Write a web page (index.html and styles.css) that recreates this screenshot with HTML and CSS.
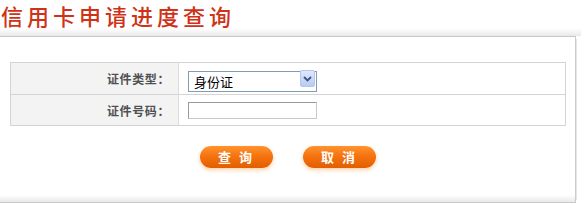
FILE: index.html
```html
<!DOCTYPE html>
<html lang="zh-CN">
<head>
<meta charset="utf-8">
<title>信用卡申请进度查询</title>
<link rel="stylesheet" href="styles.css">
</head>
<body>
<div class="page">
  <h1 class="title">信用卡申请进度查询</h1>
  <div class="band"></div>
  <div class="box">
    <table class="form">
      <tr>
        <th>证件类型：</th>
        <td>
          <div class="select-wrap">
            <select class="select"><option>身份证</option></select>
            <span class="arrow"><svg width="9" height="6" viewBox="0 0 9 6"><path d="M1 1 L4.5 4.5 L8 1" fill="none" stroke="#3d5484" stroke-width="1.8"/></svg></span>
          </div>
        </td>
      </tr>
      <tr>
        <th>证件号码：</th>
        <td><input class="input" type="text"></td>
      </tr>
    </table>
    <div class="actions">
      <button class="btn" type="button">查询</button>
      <button class="btn" type="button">取消</button>
    </div>
    <div class="foot"></div>
  </div>
</div>
</body>
</html>
```
FILE: styles.css
```css
html, body {
  margin: 0;
  padding: 0;
  background: #fff;
}
.page {
  width: 582px;
  height: 205px;
  overflow: hidden;
  font-family: "Noto Sans CJK SC", "Liberation Sans", sans-serif;
}
.title {
  margin: 0;
  height: 28px;
  padding: 0 0 0 1px;
  line-height: 30px;
  font-size: 22px;
  font-weight: 500;
  letter-spacing: 4px;
  color: #cf3317;
  white-space: nowrap;
}
.band {
  position: relative;
  height: 8px;
  width: 581px;
  background: linear-gradient(rgba(255,255,255,0), #e9e9e9);
}
.box {
  box-sizing: border-box;
  width: 576px;
  height: 167px;
  border-top: 1px solid #c6c6c6;
  border-right: 1px solid #cccccc;
  box-shadow: 4px 0 0 -3px #e6e6e6;
  padding-top: 25px;
  display: flex;
  flex-direction: column;
}
.form {
  margin-left: 10px;
  width: 556px;
  border-collapse: collapse;
  border: 1px solid #d4d4d4;
}
.form th, .form td {
  border-top: 1px solid #d4d4d4;
  border-bottom: 1px solid #d4d4d4;
  padding: 0;
}
.form tr:first-child th, .form tr:first-child td { height: 31px; }
.form tr:last-child th, .form tr:last-child td { height: 30px; }
.form th {
  width: 159px;
  padding-right: 8px;
  text-align: right;
  background: #f3f3f3;
  border-right: 1px solid #dcdcdc;
  font-size: 12px;
  font-weight: bold;
  color: #505050;
  letter-spacing: 0.6px;
}
.form td {
  padding-left: 9px;
  vertical-align: middle;
}
.select-wrap {
  position: relative;
  width: 129px;
  height: 21px;
}
.select {
  -webkit-appearance: none;
  appearance: none;
  box-sizing: border-box;
  width: 129px;
  height: 21px;
  margin: 0;
  padding: 0 0 0 5px;
  border: 1px solid #7f9db9;
  border-radius: 0;
  background: #fff;
  font-family: "Noto Sans CJK SC", sans-serif;
  font-size: 13px;
  color: #000;
}
.arrow {
  position: absolute;
  right: 2px;
  top: 2px;
  width: 15px;
  height: 17px;
  box-sizing: border-box;
  border: 1px solid #b4c6ee;
  border-radius: 2px;
  background: linear-gradient(#dfe8fd, #b8cbf3);
  display: flex;
  align-items: center;
  justify-content: center;
  pointer-events: none;
}
.input {
  box-sizing: border-box;
  display: block;
  width: 129px;
  height: 17px;
  margin: 0;
  padding: 0;
  border: 1px solid #9a9a9a;
  border-right-color: #c9c9c9;
  border-bottom-color: #c9c9c9;
  background: #fff;
}
.actions {
  display: flex;
  justify-content: center;
  gap: 30px;
  margin-top: 20px;
}
.btn {
  width: 73px;
  height: 22px;
  border: 0;
  border-radius: 11px;
  padding: 0 0 0 6px;
  background: linear-gradient(#ff9430, #f57410 45%, #e25e00);
  box-shadow: 0 2px 4px rgba(255, 150, 60, 0.45);
  color: #fff;
  font-family: "Noto Sans CJK SC", sans-serif;
  font-size: 13px;
  font-weight: bold;
  letter-spacing: 8px;
  line-height: 22px;
}
.foot {
  margin-top: auto;
  height: 7px;
  border-bottom: 1px solid #c9c9c9;
  background: linear-gradient(#ffffff, #e8e8e8);
}
```
